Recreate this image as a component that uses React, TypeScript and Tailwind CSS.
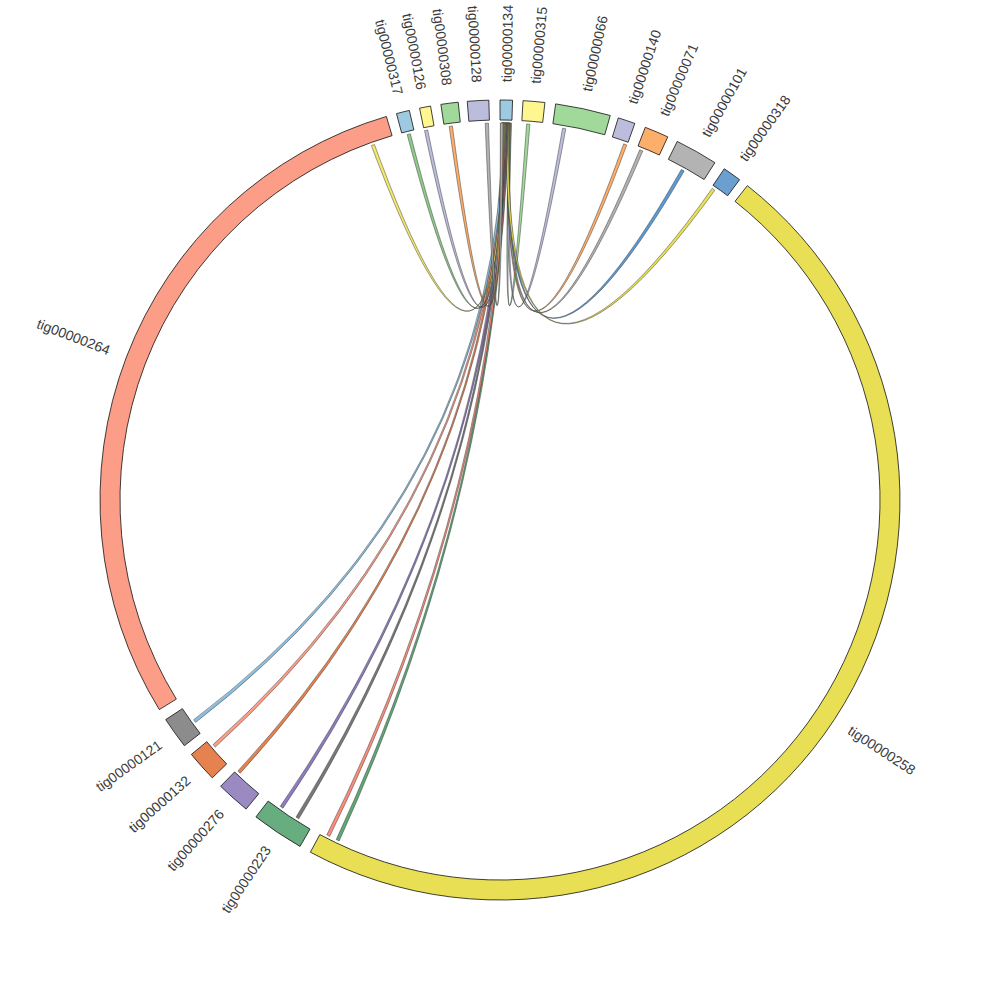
const CX = 500;
const CY = 500;
const R_OUT = 400;
const R_IN = 380;
const R_LINK = 377;
const R_LABEL = 418;

type Segment = { name: string; start: number; end: number; color: string };
type Link = { at: number; color: string };

const segments: Segment[] = [
  { name: "tig00000264", start: 238.4, end: 343.5, color: "#fc9d87" },
  { name: "tig00000317", start: 345.0, end: 346.9, color: "#9ecae1" },
  { name: "tig00000126", start: 348.4, end: 350.0, color: "#fff68f" },
  { name: "tig00000308", start: 351.5, end: 354.0, color: "#a1d99b" },
  { name: "tig00000128", start: 355.3, end: 358.4, color: "#bcbddc" },
  { name: "tig00000134", start: 0, end: 1.8, color: "#9ecae1" },
  { name: "tig00000315", start: 3.3, end: 6.45, color: "#fff68f" },
  { name: "tig00000066", start: 8.0, end: 16.0, color: "#a1d99b" },
  { name: "tig00000140", start: 17.2, end: 19.7, color: "#bcbddc" },
  { name: "tig00000071", start: 21.3, end: 24.8, color: "#fdae6b" },
  { name: "tig00000101", start: 26.3, end: 32.5, color: "#b3b3b3" },
  { name: "tig00000318", start: 34.1, end: 36.8, color: "#6a9fcf" },
  { name: "tig00000258", start: 38.2, end: 208.3, color: "#e8df55" },
  { name: "tig00000223", start: 210.0, end: 217.6, color: "#67ad7f" },
  { name: "tig00000276", start: 219.4, end: 224.3, color: "#9b8ac2" },
  { name: "tig00000132", start: 226.0, end: 230.5, color: "#e5824f" },
  { name: "tig00000121", start: 232.1, end: 236.7, color: "#8c8c8c" },
];

// every link runs to tig00000134
const links: Link[] = [
  { at: 4.3, color: "#a1d99b" },
  { at: 9.8, color: "#bcbddc" },
  { at: 19.4, color: "#fdae6b" },
  { at: 22.0, color: "#b3b3b3" },
  { at: 29.0, color: "#5b9bd5" },
  { at: 34.5, color: "#e8df55" },
  { at: 205.5, color: "#5fa877" },
  { at: 207.1, color: "#fc8d7a" },
  { at: 212.5, color: "#7a7a7a" },
  { at: 215.4, color: "#8f7cc0" },
  { at: 223.8, color: "#e5824f" },
  { at: 229.3, color: "#fc9d87" },
  { at: 234.1, color: "#8cc0e0" },
  { at: 340.3, color: "#f3e96a" },
  { at: 346.0, color: "#8fcb89" },
  { at: 348.7, color: "#bcbddc" },
  { at: 352.5, color: "#fdae6b" },
  { at: 358.0, color: "#b3b3b3" },
];

function pt(r: number, deg: number) {
  const a = (deg * Math.PI) / 180;
  return `${(CX + r * Math.sin(a)).toFixed(2)} ${(CY - r * Math.cos(a)).toFixed(2)}`;
}

function segmentPath(s: Segment) {
  const large = s.end - s.start > 180 ? 1 : 0;
  return [
    `M ${pt(R_OUT, s.start)}`,
    `A ${R_OUT} ${R_OUT} 0 ${large} 1 ${pt(R_OUT, s.end)}`,
    `L ${pt(R_IN, s.end)}`,
    `A ${R_IN} ${R_IN} 0 ${large} 0 ${pt(R_IN, s.start)}`,
    "Z",
  ].join(" ");
}

function linkPath(s1: number, s2: number, h1: number, h2: number) {
  const c = `${CX} ${CY - 12}`;
  return [
    `M ${pt(R_LINK, s1)}`,
    `A ${R_LINK} ${R_LINK} 0 0 1 ${pt(R_LINK, s2)}`,
    `Q ${c} ${pt(R_LINK, h1)}`,
    `A ${R_LINK} ${R_LINK} 0 0 1 ${pt(R_LINK, h2)}`,
    `Q ${c} ${pt(R_LINK, s1)}`,
    "Z",
  ].join(" ");
}

function Label({ s }: { s: Segment }) {
  const mid = (s.start + s.end) / 2;
  const a = (mid * Math.PI) / 180;
  const x = CX + R_LABEL * Math.sin(a);
  const y = CY - R_LABEL * Math.cos(a);
  const right = mid < 180;
  const rot = right ? mid - 90 : mid - 270;
  return (
    <text
      x={x}
      y={y}
      fontSize={14}
      fill="#3a3a3a"
      dominantBaseline="central"
      textAnchor={right ? "start" : "end"}
      transform={`rotate(${rot} ${x} ${y})`}
    >
      {s.name}
    </text>
  );
}

export default function ChordPlot() {
  const half = 0.25;
  const hubHalf = 0.2;
  const hubStep = 1.3 / (links.length - 1);

  return (
    <main className="h-[1000px] w-[1000px] bg-white">
      <svg
        width={1000}
        height={1000}
        viewBox="0 0 1000 1000"
        className="block font-['Liberation_Sans',Arial,sans-serif]"
      >
        {links.map((l, i) => {
          const hc = 1.55 - i * hubStep;
          return (
            <path
              key={l.at}
              d={linkPath(l.at - half, l.at + half, hc - hubHalf, hc + hubHalf)}
              fill={l.color}
              stroke="#2b2b2b"
              strokeWidth={0.45}
            />
          );
        })}
        {segments.map((s) => (
          <path key={s.name} d={segmentPath(s)} fill={s.color} stroke="#111111" strokeWidth={0.8} />
        ))}
        {segments.map((s) => (
          <Label key={s.name} s={s} />
        ))}
      </svg>
    </main>
  );
}
